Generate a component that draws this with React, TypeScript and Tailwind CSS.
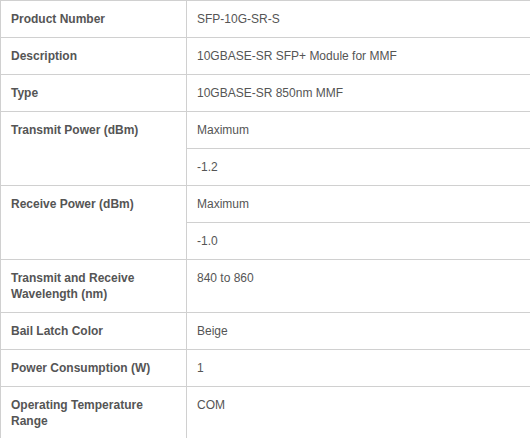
const specs: { label: string; values: string[] }[] = [
  { label: "Product Number", values: ["SFP-10G-SR-S"] },
  { label: "Description", values: ["10GBASE-SR SFP+ Module for MMF"] },
  { label: "Type", values: ["10GBASE-SR 850nm MMF"] },
  { label: "Transmit Power (dBm)", values: ["Maximum", "-1.2"] },
  { label: "Receive Power (dBm)", values: ["Maximum", "-1.0"] },
  { label: "Transmit and Receive Wavelength (nm)", values: ["840 to 860"] },
  { label: "Bail Latch Color", values: ["Beige"] },
  { label: "Power Consumption (W)", values: ["1"] },
  { label: "Operating Temperature Range", values: ["COM"] },
]

export default function App() {
  return (
    <div className="w-[530px] h-[438px] overflow-hidden bg-white">
      <table
        className="w-[540px] table-fixed border-collapse text-[12px] leading-[16px] text-[#555]"
        style={{ fontFamily: '"Liberation Sans", Arial, sans-serif' }}
      >
        <colgroup>
          <col className="w-[186px]" />
          <col />
        </colgroup>
        <tbody>
          {specs.map((row) =>
            row.values.map((v, i) => (
              <tr key={row.label + i}>
                {i === 0 && (
                  <td
                    rowSpan={row.values.length}
                    className="border border-[#d0d0d0] px-[10px] py-[10px] align-top font-bold"
                  >
                    {row.label}
                  </td>
                )}
                <td className="border border-[#d0d0d0] px-[10px] py-[10px] align-top">{v}</td>
              </tr>
            ))
          )}
        </tbody>
      </table>
    </div>
  )
}
